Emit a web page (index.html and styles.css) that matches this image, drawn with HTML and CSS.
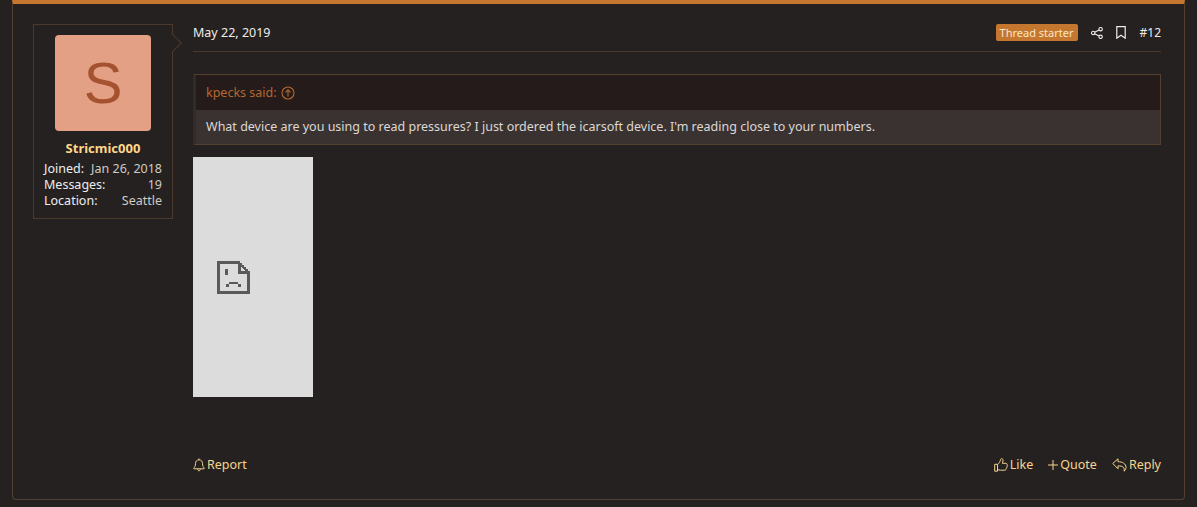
FILE: index.html
```html
<!DOCTYPE html>
<html lang="en">
<head>
<meta charset="utf-8">
<title>Post #12</title>
<link rel="stylesheet" href="styles.css">
</head>
<body>
<article class="card">
  <aside class="user">
    <div class="avatar">S</div>
    <div class="name">Stricmic000</div>
    <dl class="stats">
      <div class="stat"><dt>Joined:</dt><dd>Jan 26, 2018</dd></div>
      <div class="stat"><dt>Messages:</dt><dd>19</dd></div>
      <div class="stat"><dt>Location:</dt><dd>Seattle</dd></div>
    </dl>
  </aside>
  <div class="main">
    <header class="attr">
      <span class="date">May 22, 2019</span>
      <div class="attr-right">
        <span class="badge">Thread starter</span>
        <svg class="share" viewBox="0 0 12 12" fill="none" stroke="currentColor" stroke-width="1.1"><circle cx="2.200" cy="6" r="1.700"/><circle cx="9.600" cy="2.200" r="1.700"/><circle cx="9.600" cy="9.800" r="1.700"/><path d="M3.700 5.200 8.100 3M3.700 6.800 8.100 9"/></svg>
        <svg class="mark" viewBox="0 0 10 13" fill="none" stroke="currentColor" stroke-width="1.200"><path d="M.8.700h8.400v11.500L5 9.300.8 12.200z"/></svg>
        <span class="num">#12</span>
      </div>
    </header>
    <blockquote class="quote">
      <div class="quote-head">kpecks said:
        <svg class="up" viewBox="0 0 14 14" fill="none" stroke="currentColor" stroke-width="1.100"><circle cx="7" cy="7" r="6"/><path d="M7 10.400V4M4.500 6.400 7 3.900l2.500 2.500"/></svg>
      </div>
      <div class="quote-body">What device are you using to read pressures? I just ordered the icarsoft device. I'm reading close to your numbers.</div>
    </blockquote>
    <div class="broken">
      <svg class="sad" viewBox="0 0 16 16" shape-rendering="crispEdges"><path fill="#5a5a5a" fill-rule="evenodd" d="M0 0h11v1h1v1h1v1h1v1h1v1h1v11H0zM1.500 1.500v13h13V6.500H10V1.500zM11.500 2.500V5h2.500z"/><path fill="#5a5a5a" d="M4 4h1.500v3H4zM6 10h4v1H6zM4.500 11H6v1.500H4.500zM10 11h1.500v1.500H10z"/></svg>
    </div>
    <footer class="actions">
      <a class="act">
        <svg class="bell" viewBox="0 0 12 14" fill="none" stroke="currentColor" stroke-width="1"><path d="M6 1.800c-2.400 0-3.500 1.800-3.500 3.800 0 2.900-1.100 3.700-1.800 4.500-.2.300 0 .7.400.7h9.800c.4 0 .6-.4.400-.7-.7-.8-1.800-1.600-1.800-4.500 0-2-1.100-3.800-3.500-3.800zM6 .5v1.300M4.700 11c0 1 .6 1.800 1.300 1.800s1.300-.8 1.300-1.800"/></svg>Report
      </a>
      <div class="acts-right">
        <a class="act">
          <svg class="thumb" viewBox="0 0 14 14" fill="none" stroke="currentColor" stroke-width="1"><path d="M.7 6.300h2.800v6.900H.7zM3.500 6.600C5 5.600 6 3.800 6.400 2.100c.2-1 .5-1.500 1.200-1.500 1.100 0 1.600 1.100 1.400 2.300-.1.900-.5 1.700-.7 2.400h3.600c1 0 1.500 1 1.100 1.700.5.600.4 1.400-.2 1.800.2.700 0 1.300-.6 1.600.1.900-.4 1.800-1.400 1.800H6.500c-1.300 0-2-.5-3-.8"/></svg>Like
        </a>
        <a class="act">
          <svg class="plus" viewBox="0 0 10 10" fill="none" stroke="currentColor" stroke-width="1"><path d="M5 0v10M0 5h10"/></svg>Quote
        </a>
        <a class="act">
          <svg class="reply" viewBox="0 0 15 14" fill="none" stroke="currentColor" stroke-width="1"><path d="M.8 5.500 6 .8v2.900c4.500 0 8 1.900 8 5.700 0 1.700-.7 2.900-2 3.800 1-3.600-1-5.400-6-5.300v2.900z"/></svg>Reply
        </a>
      </div>
    </footer>
  </div>
</article>
</body>
</html>
```
FILE: styles.css
```css
* { box-sizing: border-box; }
html, body { margin: 0; height: 100%; }
body {
  background: #242120;
  color: #e8e4e0;
  font: 12.5px/16px "Noto Sans", "Open Sans", sans-serif;
  padding: 0 12px 7px;
  overflow: hidden;
}
.card {
  display: flex;
  gap: 20px;
  height: 500px;
  width: 1173px;
  padding: 20px 23px 0 20px;
  border: 1px solid #54402f;
  border-top: 4px solid #c6772f;
  border-radius: 0 0 4px 4px;
}
.user {
  position: relative;
  flex: 0 0 140px;
  height: 195px;
  padding: 10px 10px 0;
  border: 1px solid #4b3a2c;
}
.user::after {
  content: "";
  position: absolute;
  top: 11px;
  right: -7px;
  width: 13px;
  height: 13px;
  background: #242120;
  border-top: 1px solid #4b3a2c;
  border-right: 1px solid #4b3a2c;
  transform: rotate(45deg);
}
.avatar {
  width: 96px;
  height: 96px;
  margin: 0 auto;
  border-radius: 4px;
  background: #e4a084;
  color: #a4522f;
  font: 58px/96px "Liberation Sans", sans-serif;
  text-align: center;
}
.name {
  margin-top: 9px;
  color: #ffd68a;
  font-weight: 700;
  font-size: 13px;
  line-height: 17px;
  text-align: center;
}
.stats { margin: 4px 0 0; }
.stat { display: flex; justify-content: space-between; }
.stat dd { margin: 0; color: #cfcac5; }
.stat dt { color: #eee; }
.main { flex: 1; min-width: 0; }
.attr {
  display: flex;
  align-items: center;
  justify-content: space-between;
  height: 28px;
  padding-bottom: 10px;
  border-bottom: 1px solid #4b3a2c;
}
.date { color: #f0ece8; }
.attr-right { display: flex; align-items: center; color: #f0ece8; }
.badge {
  padding: 0 4px;
  height: 17px;
  background: #c6772f;
  color: #fbe6c8;
  border-radius: 2px;
  font-size: 11px;
  line-height: 17px;
  margin-right: 13px;
}
.share { width: 12px; height: 12px; margin-right: 13px; }
.mark { width: 10px; height: 13px; margin-right: 14px; }
.num { font-size: 12px; }
.quote {
  margin: 22px 0 12px;
  border: 1px solid #54402f;
  border-left: 3px solid #322b27;
  background: #3a3231;
}
.quote-head {
  display: flex;
  align-items: center;
  gap: 4px;
  height: 35px;
  padding-left: 10px;
  background: #241b1a;
  color: #b5672e;
}
.up { width: 14px; height: 14px; }
.quote-body { height: 34px; padding: 9px 10px 0; color: #dcd8d4; }
.broken {
  display: flex;
  align-items: center;
  width: 120px;
  height: 240px;
  padding-left: 24px;
  background: #dcdcdc;
}
.sad { width: 33px; height: 41px; }
.actions {
  display: flex;
  justify-content: space-between;
  align-items: center;
  margin-top: 60px;
  color: #f6d48f;
}
.acts-right { display: flex; gap: 15px; }
.act { display: flex; align-items: center; gap: 2px; }
.actions > .act svg, .acts-right svg { flex: none; }
.bell { width: 12px; height: 14px; }
.thumb { width: 14px; height: 14px; }
.plus { width: 10px; height: 10px; }
.reply { width: 15px; height: 14px; }
```
